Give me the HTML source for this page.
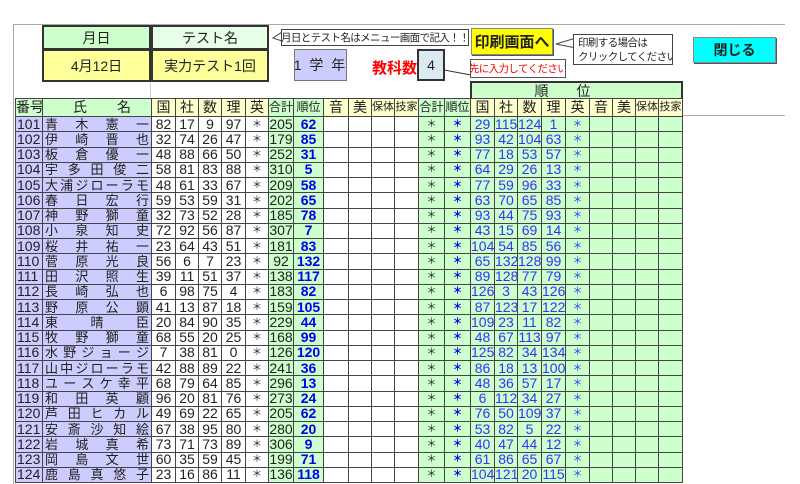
<!DOCTYPE html>
<html><head><meta charset="utf-8"><style>
*{margin:0;padding:0;box-sizing:border-box}
body{width:800px;height:480px;background:#fff;position:relative;overflow:hidden;font-family:"Liberation Sans","Noto Sans CJK JP",sans-serif;color:#222}
.a{position:absolute}
.bx{position:absolute;display:flex;align-items:center;justify-content:center;font-size:14px;white-space:nowrap;overflow:hidden}
.sm{font-size:10.5px;letter-spacing:-0.6px}
table{position:absolute;left:15px;top:98px;width:667px;border-collapse:collapse;table-layout:fixed;font-size:14px}
td{border:1px solid #444;text-align:center;height:15.25px;line-height:13px;padding:0;white-space:nowrap;overflow:hidden}
tr.h td{height:18px;background:#ffffcc;font-size:14px}
tr.h td.g{background:#ccffcc}
tr.h td.s{font-size:11px}
td.n{background:#ccccff;text-align:left;padding-left:1px}
td.nm{background:#ccccff;text-align:justify;text-align-last:justify;padding:0 2px;font-size:13px;word-spacing:-4px}
td.gr{background:#ccffcc}
td.b{color:#0000ee;font-weight:bold}
td.r{color:#3333ff;background:#ccffcc}
td.k{font-size:10px}
</style></head><body>
<div class="a" style="left:13px;top:24px;width:772px;border-top:1px solid #aaa"></div>
<div class="a" style="left:13px;top:24px;height:460px;border-left:1px solid #aaa"></div>
<div class="a" style="left:150px;top:24px;height:74px;border-left:1px solid #ccc"></div>
<div class="a" style="left:683px;top:115px;width:102px;border-top:1px solid #aaa"></div>

<div class="bx" style="left:42px;top:25px;width:109px;height:25px;background:#ccffcc;border:2px solid #333">月日</div>
<div class="bx" style="left:151px;top:25px;width:118px;height:25px;background:#e6ffe6;border:2px solid #333">テスト名</div>
<div class="bx" style="left:42px;top:49px;width:109px;height:33px;background:#ffff99;border:2px solid #333">4月12日</div>
<div class="bx" style="left:151px;top:49px;width:118px;height:33px;background:#ffff99;border:2px solid #333">実力テスト1回</div>

<svg class="a" style="left:270px;top:28px" width="12" height="18"><path d="M12 4 L3 10 L12 13" fill="#fff" stroke="#444"/></svg>
<div class="bx sm" style="left:281px;top:29px;width:188px;height:17px;border:1px solid #444;background:#fff">月日とテスト名はメニュー画面で記入！！</div>

<div class="bx" style="left:294px;top:49px;width:53px;height:32px;background:#ccccff;border:1px solid #777;font-size:14px;letter-spacing:2px">1 学 年</div>
<div class="a" style="left:372px;top:57px;color:#f00;font-weight:bold;font-size:15px">教科数</div>
<div class="bx" style="left:417px;top:49px;width:28px;height:32px;background:#dbeaf0;border:2px solid #333">4</div>
<svg class="a" style="left:444px;top:65px" width="30" height="15"><path d="M0 5 L27 10" stroke="#333" fill="none"/></svg>
<div class="bx sm" style="left:470px;top:59px;width:96px;height:19px;border:1px solid #555;color:#f00;background:#fff">先に入力してください</div>

<div class="bx" style="left:471px;top:28px;width:82px;height:27px;background:#ffff00;border:1px solid #888;box-shadow:1px 1px 0 #555;font-weight:bold;font-size:15px">印刷画面へ</div>
<svg class="a" style="left:554px;top:36px" width="22" height="16"><path d="M22 2 L2 8 L22 12" fill="#fff" stroke="#444"/></svg>
<div class="a sm" style="left:573px;top:34px;width:100px;height:31px;border:1px solid #444;line-height:14px;padding:1px 4px;background:#fff;white-space:nowrap;overflow:hidden">印刷する場合は<br>クリックしてください</div>
<div class="bx" style="left:693px;top:37px;width:83px;height:26px;background:#00ffff;border:1px solid #888;box-shadow:1px 1px 0 #555;font-weight:bold;font-size:14px">閉じる</div>

<div class="bx" style="left:470px;top:81px;width:213px;height:18px;background:#ccffcc;border:2px solid #333;border-bottom:none;letter-spacing:28px;font-size:14px">順位</div>

<table>
<colgroup><col style="width:27px"><col style="width:109px"><col style="width:24px"><col style="width:23px"><col style="width:23px"><col style="width:24px"><col style="width:23px"><col style="width:25px"><col style="width:30px"><col style="width:25px"><col style="width:23px"><col style="width:23px"><col style="width:24px"><col style="width:26px"><col style="width:26px"><col style="width:24px"><col style="width:23px"><col style="width:24px"><col style="width:24px"><col style="width:24px"><col style="width:23px"><col style="width:23px"><col style="width:23px"><col style="width:24px"></colgroup>
<tr class="h"><td class="g">番号</td><td class="g" style="letter-spacing:30px;padding-left:30px">氏名</td><td>国</td><td>社</td><td>数</td><td>理</td><td>英</td><td class="g" style="font-size:12px">合計</td><td class="g" style="font-size:12px">順位</td><td>音</td><td>美</td><td class="s">保体</td><td class="s">技家</td><td class="g" style="font-size:12px">合計</td><td class="g" style="font-size:12px">順位</td><td>国</td><td>社</td><td>数</td><td>理</td><td>英</td><td>音</td><td>美</td><td class="s">保体</td><td class="s">技家</td></tr>
<tr><td class="n">101</td><td class="nm">青 木 憲 一</td><td>82</td><td>17</td><td>9</td><td>97</td><td class="k">＊</td><td class="gr">205</td><td class="gr b">62</td><td></td><td></td><td></td><td></td><td class="gr k">＊</td><td class="gr b k">＊</td><td class="r">29</td><td class="r">115</td><td class="r">124</td><td class="r">1</td><td class="r k">＊</td><td class="r"></td><td class="r"></td><td class="r"></td><td class="r"></td></tr>
<tr><td class="n">102</td><td class="nm">伊 崎 晋 也</td><td>32</td><td>74</td><td>26</td><td>47</td><td class="k">＊</td><td class="gr">179</td><td class="gr b">85</td><td></td><td></td><td></td><td></td><td class="gr k">＊</td><td class="gr b k">＊</td><td class="r">93</td><td class="r">42</td><td class="r">104</td><td class="r">63</td><td class="r k">＊</td><td class="r"></td><td class="r"></td><td class="r"></td><td class="r"></td></tr>
<tr><td class="n">103</td><td class="nm">板 倉 優 一</td><td>48</td><td>88</td><td>66</td><td>50</td><td class="k">＊</td><td class="gr">252</td><td class="gr b">31</td><td></td><td></td><td></td><td></td><td class="gr k">＊</td><td class="gr b k">＊</td><td class="r">77</td><td class="r">18</td><td class="r">53</td><td class="r">57</td><td class="r k">＊</td><td class="r"></td><td class="r"></td><td class="r"></td><td class="r"></td></tr>
<tr><td class="n">104</td><td class="nm">宇 多 田 俊 二</td><td>58</td><td>81</td><td>83</td><td>88</td><td class="k">＊</td><td class="gr">310</td><td class="gr b">5</td><td></td><td></td><td></td><td></td><td class="gr k">＊</td><td class="gr b k">＊</td><td class="r">64</td><td class="r">29</td><td class="r">26</td><td class="r">13</td><td class="r k">＊</td><td class="r"></td><td class="r"></td><td class="r"></td><td class="r"></td></tr>
<tr><td class="n">105</td><td class="nm">大 浦 ジ ロ ー ラ モ</td><td>48</td><td>61</td><td>33</td><td>67</td><td class="k">＊</td><td class="gr">209</td><td class="gr b">58</td><td></td><td></td><td></td><td></td><td class="gr k">＊</td><td class="gr b k">＊</td><td class="r">77</td><td class="r">59</td><td class="r">96</td><td class="r">33</td><td class="r k">＊</td><td class="r"></td><td class="r"></td><td class="r"></td><td class="r"></td></tr>
<tr><td class="n">106</td><td class="nm">春 日 宏 行</td><td>59</td><td>53</td><td>59</td><td>31</td><td class="k">＊</td><td class="gr">202</td><td class="gr b">65</td><td></td><td></td><td></td><td></td><td class="gr k">＊</td><td class="gr b k">＊</td><td class="r">63</td><td class="r">70</td><td class="r">65</td><td class="r">85</td><td class="r k">＊</td><td class="r"></td><td class="r"></td><td class="r"></td><td class="r"></td></tr>
<tr><td class="n">107</td><td class="nm">神 野 獅 童</td><td>32</td><td>73</td><td>52</td><td>28</td><td class="k">＊</td><td class="gr">185</td><td class="gr b">78</td><td></td><td></td><td></td><td></td><td class="gr k">＊</td><td class="gr b k">＊</td><td class="r">93</td><td class="r">44</td><td class="r">75</td><td class="r">93</td><td class="r k">＊</td><td class="r"></td><td class="r"></td><td class="r"></td><td class="r"></td></tr>
<tr><td class="n">108</td><td class="nm">小 泉 知 史</td><td>72</td><td>92</td><td>56</td><td>87</td><td class="k">＊</td><td class="gr">307</td><td class="gr b">7</td><td></td><td></td><td></td><td></td><td class="gr k">＊</td><td class="gr b k">＊</td><td class="r">43</td><td class="r">15</td><td class="r">69</td><td class="r">14</td><td class="r k">＊</td><td class="r"></td><td class="r"></td><td class="r"></td><td class="r"></td></tr>
<tr><td class="n">109</td><td class="nm">桜 井 祐 一</td><td>23</td><td>64</td><td>43</td><td>51</td><td class="k">＊</td><td class="gr">181</td><td class="gr b">83</td><td></td><td></td><td></td><td></td><td class="gr k">＊</td><td class="gr b k">＊</td><td class="r">104</td><td class="r">54</td><td class="r">85</td><td class="r">56</td><td class="r k">＊</td><td class="r"></td><td class="r"></td><td class="r"></td><td class="r"></td></tr>
<tr><td class="n">110</td><td class="nm">菅 原 光 良</td><td>56</td><td>6</td><td>7</td><td>23</td><td class="k">＊</td><td class="gr">92</td><td class="gr b">132</td><td></td><td></td><td></td><td></td><td class="gr k">＊</td><td class="gr b k">＊</td><td class="r">65</td><td class="r">132</td><td class="r">128</td><td class="r">99</td><td class="r k">＊</td><td class="r"></td><td class="r"></td><td class="r"></td><td class="r"></td></tr>
<tr><td class="n">111</td><td class="nm">田 沢 照 生</td><td>39</td><td>11</td><td>51</td><td>37</td><td class="k">＊</td><td class="gr">138</td><td class="gr b">117</td><td></td><td></td><td></td><td></td><td class="gr k">＊</td><td class="gr b k">＊</td><td class="r">89</td><td class="r">128</td><td class="r">77</td><td class="r">79</td><td class="r k">＊</td><td class="r"></td><td class="r"></td><td class="r"></td><td class="r"></td></tr>
<tr><td class="n">112</td><td class="nm">長 崎 弘 也</td><td>6</td><td>98</td><td>75</td><td>4</td><td class="k">＊</td><td class="gr">183</td><td class="gr b">82</td><td></td><td></td><td></td><td></td><td class="gr k">＊</td><td class="gr b k">＊</td><td class="r">126</td><td class="r">3</td><td class="r">43</td><td class="r">126</td><td class="r k">＊</td><td class="r"></td><td class="r"></td><td class="r"></td><td class="r"></td></tr>
<tr><td class="n">113</td><td class="nm">野 原 公 顕</td><td>41</td><td>13</td><td>87</td><td>18</td><td class="k">＊</td><td class="gr">159</td><td class="gr b">105</td><td></td><td></td><td></td><td></td><td class="gr k">＊</td><td class="gr b k">＊</td><td class="r">87</td><td class="r">123</td><td class="r">17</td><td class="r">122</td><td class="r k">＊</td><td class="r"></td><td class="r"></td><td class="r"></td><td class="r"></td></tr>
<tr><td class="n">114</td><td class="nm" style="word-spacing:0">東 &nbsp; 晴 &nbsp; 臣</td><td>20</td><td>84</td><td>90</td><td>35</td><td class="k">＊</td><td class="gr">229</td><td class="gr b">44</td><td></td><td></td><td></td><td></td><td class="gr k">＊</td><td class="gr b k">＊</td><td class="r">109</td><td class="r">23</td><td class="r">11</td><td class="r">82</td><td class="r k">＊</td><td class="r"></td><td class="r"></td><td class="r"></td><td class="r"></td></tr>
<tr><td class="n">115</td><td class="nm">牧 野 獅 童</td><td>68</td><td>55</td><td>20</td><td>25</td><td class="k">＊</td><td class="gr">168</td><td class="gr b">99</td><td></td><td></td><td></td><td></td><td class="gr k">＊</td><td class="gr b k">＊</td><td class="r">48</td><td class="r">67</td><td class="r">113</td><td class="r">97</td><td class="r k">＊</td><td class="r"></td><td class="r"></td><td class="r"></td><td class="r"></td></tr>
<tr><td class="n">116</td><td class="nm">水 野 ジ ョ ー ジ</td><td>7</td><td>38</td><td>81</td><td>0</td><td class="k">＊</td><td class="gr">126</td><td class="gr b">120</td><td></td><td></td><td></td><td></td><td class="gr k">＊</td><td class="gr b k">＊</td><td class="r">125</td><td class="r">82</td><td class="r">34</td><td class="r">134</td><td class="r k">＊</td><td class="r"></td><td class="r"></td><td class="r"></td><td class="r"></td></tr>
<tr><td class="n">117</td><td class="nm">山 中 ジ ロ ー ラ モ</td><td>42</td><td>88</td><td>89</td><td>22</td><td class="k">＊</td><td class="gr">241</td><td class="gr b">36</td><td></td><td></td><td></td><td></td><td class="gr k">＊</td><td class="gr b k">＊</td><td class="r">86</td><td class="r">18</td><td class="r">13</td><td class="r">100</td><td class="r k">＊</td><td class="r"></td><td class="r"></td><td class="r"></td><td class="r"></td></tr>
<tr><td class="n">118</td><td class="nm">ユ ー ス ケ 幸 平</td><td>68</td><td>79</td><td>64</td><td>85</td><td class="k">＊</td><td class="gr">296</td><td class="gr b">13</td><td></td><td></td><td></td><td></td><td class="gr k">＊</td><td class="gr b k">＊</td><td class="r">48</td><td class="r">36</td><td class="r">57</td><td class="r">17</td><td class="r k">＊</td><td class="r"></td><td class="r"></td><td class="r"></td><td class="r"></td></tr>
<tr><td class="n">119</td><td class="nm">和 田 英 顧</td><td>96</td><td>20</td><td>81</td><td>76</td><td class="k">＊</td><td class="gr">273</td><td class="gr b">24</td><td></td><td></td><td></td><td></td><td class="gr k">＊</td><td class="gr b k">＊</td><td class="r">6</td><td class="r">112</td><td class="r">34</td><td class="r">27</td><td class="r k">＊</td><td class="r"></td><td class="r"></td><td class="r"></td><td class="r"></td></tr>
<tr><td class="n">120</td><td class="nm">芦 田 ヒ カ ル</td><td>49</td><td>69</td><td>22</td><td>65</td><td class="k">＊</td><td class="gr">205</td><td class="gr b">62</td><td></td><td></td><td></td><td></td><td class="gr k">＊</td><td class="gr b k">＊</td><td class="r">76</td><td class="r">50</td><td class="r">109</td><td class="r">37</td><td class="r k">＊</td><td class="r"></td><td class="r"></td><td class="r"></td><td class="r"></td></tr>
<tr><td class="n">121</td><td class="nm">安 斎 沙 知 絵</td><td>67</td><td>38</td><td>95</td><td>80</td><td class="k">＊</td><td class="gr">280</td><td class="gr b">20</td><td></td><td></td><td></td><td></td><td class="gr k">＊</td><td class="gr b k">＊</td><td class="r">53</td><td class="r">82</td><td class="r">5</td><td class="r">22</td><td class="r k">＊</td><td class="r"></td><td class="r"></td><td class="r"></td><td class="r"></td></tr>
<tr><td class="n">122</td><td class="nm">岩 城 真 希</td><td>73</td><td>71</td><td>73</td><td>89</td><td class="k">＊</td><td class="gr">306</td><td class="gr b">9</td><td></td><td></td><td></td><td></td><td class="gr k">＊</td><td class="gr b k">＊</td><td class="r">40</td><td class="r">47</td><td class="r">44</td><td class="r">12</td><td class="r k">＊</td><td class="r"></td><td class="r"></td><td class="r"></td><td class="r"></td></tr>
<tr><td class="n">123</td><td class="nm">岡 島 文 世</td><td>60</td><td>35</td><td>59</td><td>45</td><td class="k">＊</td><td class="gr">199</td><td class="gr b">71</td><td></td><td></td><td></td><td></td><td class="gr k">＊</td><td class="gr b k">＊</td><td class="r">61</td><td class="r">86</td><td class="r">65</td><td class="r">67</td><td class="r k">＊</td><td class="r"></td><td class="r"></td><td class="r"></td><td class="r"></td></tr>
<tr><td class="n">124</td><td class="nm">鹿 島 真 悠 子</td><td>23</td><td>16</td><td>86</td><td>11</td><td class="k">＊</td><td class="gr">136</td><td class="gr b">118</td><td></td><td></td><td></td><td></td><td class="gr k">＊</td><td class="gr b k">＊</td><td class="r">104</td><td class="r">121</td><td class="r">20</td><td class="r">115</td><td class="r k">＊</td><td class="r"></td><td class="r"></td><td class="r"></td><td class="r"></td></tr>
</table>
</body></html>
